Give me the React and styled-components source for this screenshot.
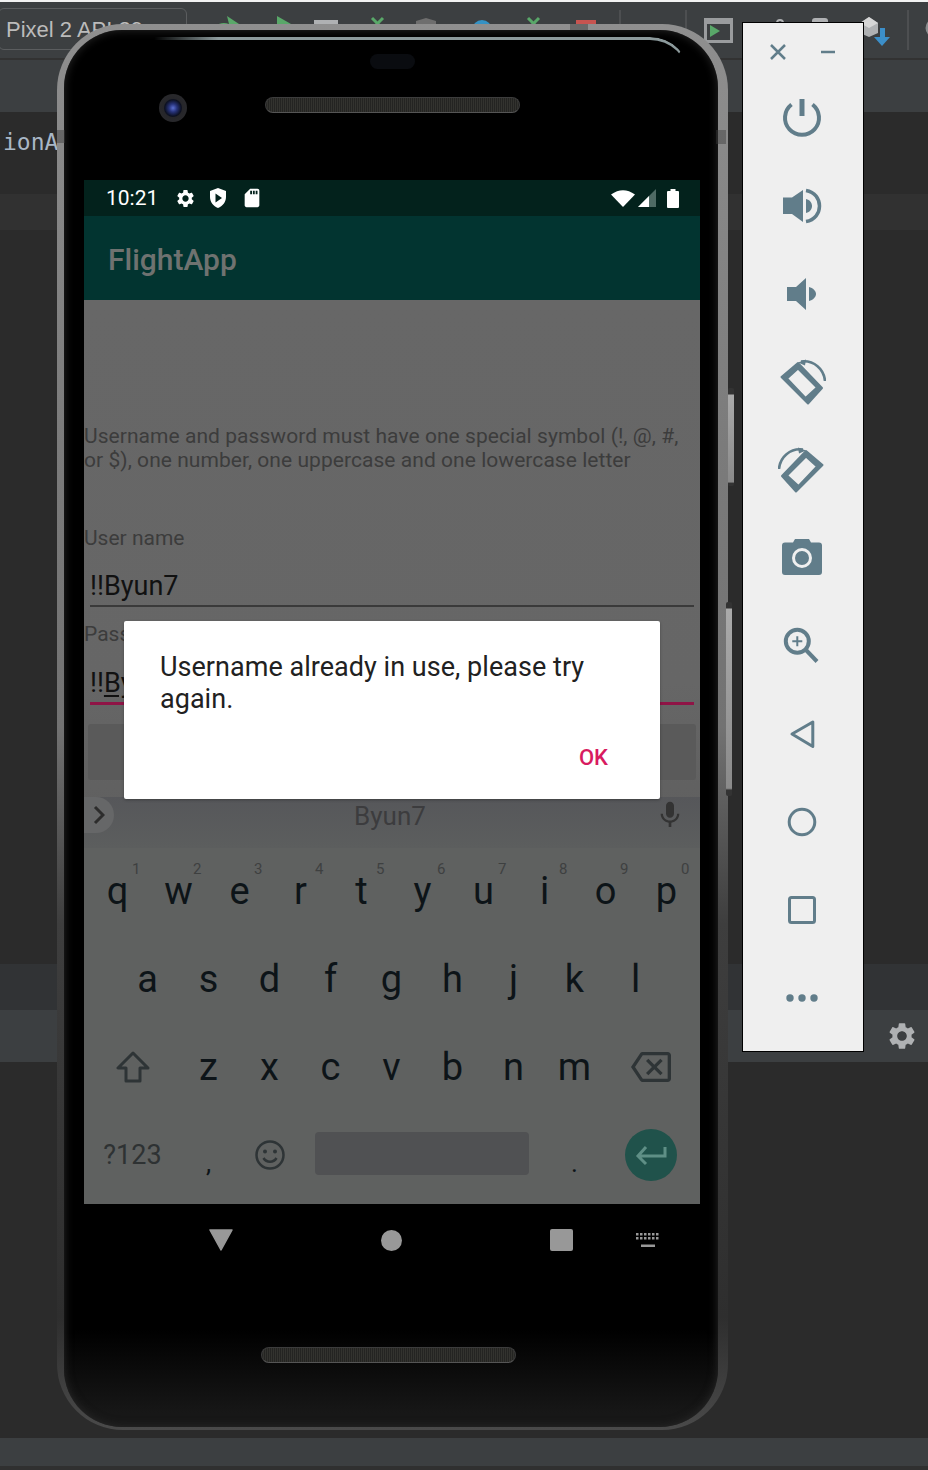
import styled, { createGlobalStyle } from "styled-components";
import { MdSettings, MdSdCard, MdMic, MdOutlineBackspace } from "react-icons/md";

const GlobalStyle = createGlobalStyle`
html, body { margin: 0; padding: 0; background: #2b2b2b; }
* { box-sizing: border-box; }
`;

const Page = styled.div`
position: relative;
width: 928px;
height: 1470px;
overflow: hidden;
background: #2b2b2b;
font-family: Roboto, "Liberation Sans", sans-serif;
`;

/* ide behind the emulator */
const Toolbar = styled.div`
display: flex;
align-items: flex-start;
height: 60px;
background: #3c3f41;
border-top: 2px solid #f2f2f2;
border-bottom: 2px solid #323232;
`;

const Combo = styled.div`
flex: none;
width: 189px;
height: 42px;
margin: 6px 0 0 -2px;
padding-left: 7px;
border: 1px solid #5b5d5f;
border-radius: 6px;
color: #bbbbbb;
font-family: "Liberation Sans", sans-serif;
font-size: 22px;
line-height: 42px;
white-space: nowrap;
`;

const ToolSlot = styled.svg`
flex: none;
margin-left: ${(p) => p.$left}px;
margin-top: ${(p) => p.$top}px;
`;

const Separator = styled.div`
flex: none;
width: 2px;
height: 40px;
margin-top: 8px;
margin-left: ${(p) => p.$left}px;
background: #4d4f51;
`;

const Band = styled.div`
height: ${(p) => p.$h}px;
background: ${(p) => p.$bg};
overflow: hidden;
`;

const CodeLine = styled.div`
margin: 17px 0 0 3px;
color: #a9b7c6;
font-family: "DejaVu Sans Mono", monospace;
font-size: 23px;
line-height: 26px;
`;

const GearBand = styled(Band)`
display: flex;
justify-content: flex-end;
align-items: center;
padding-right: 10px;
color: #afb1b3;
`;

/* phone */
const Shell = styled.div`
position: absolute;
left: 57px;
top: 24px;
width: 671px;
height: 1406px;
padding: 6px 10px 3px 7px;
border-radius: 66px;
background: linear-gradient(180deg, #8f8f8f 0, #7b7b7b 30%, #727272 50%, #3e3e3e 64%, #2e2e2e 92%, #4a4a4a 100%);
`;

const SideButton = styled.div`
position: absolute;
left: ${(p) => p.$left}px;
top: ${(p) => p.$top}px;
width: 6px;
height: ${(p) => p.$h}px;
border-radius: 2px;
background: linear-gradient(180deg, #333 0, #333 6px, #aaa 7px, #8a8a8a 96%, #333 97%);
`;

const Chip = styled.div`
position: absolute;
left: ${(p) => p.$left}px;
top: ${(p) => p.$top}px;
width: ${(p) => p.$w}px;
height: ${(p) => p.$h}px;
background: rgba(60, 60, 60, 0.45);
`;

const Bezel = styled.div`
position: relative;
display: flex;
flex-direction: column;
height: 100%;
padding: 0 17px 0 20px;
border-radius: 58px;
background: linear-gradient(180deg, #000 0, #000 93%, #171717 99%);
box-shadow: inset 0 0 10px #2a2a2a;
`;

const Highlight = styled.div`
position: absolute;
left: 90px;
right: 28px;
top: 7px;
height: 40px;
border-top: 3px solid #8c9a9c;
border-right: 2px solid transparent;
border-radius: 0 46px 0 0;
-webkit-mask-image: linear-gradient(90deg, transparent, #000 12%);
mask-image: linear-gradient(90deg, transparent, #000 12%);
`;

const TopBezel = styled.div`
flex: none;
height: 150px;
padding-top: 24px;
`;

const Sensor = styled.div`
width: 45px;
height: 15px;
margin: 0 auto 25px;
border-radius: 8px;
background: #0a0c10;
`;

const CameraRow = styled.div`
display: grid;
grid-template-columns: 1fr auto 1fr;
`;

const Camera = styled.div`
justify-self: end;
width: 28px;
height: 28px;
margin-right: 78px;
border-radius: 50%;
background: radial-gradient(circle at 50% 50%, #5b6fd0 0, #27337a 20%, #0c1020 42%, #26262a 48%, #2c2c2e 100%);
`;

const Speaker = styled.div`
width: ${(p) => p.$w}px;
height: 16px;
margin-top: ${(p) => p.$mt}px;
margin-right: ${(p) => p.$mr || 0}px;
border: 1px solid #3c3c3c;
border-bottom-color: #555;
border-radius: 8px;
background: repeating-linear-gradient(90deg, #242422 0, #242422 1px, #33332f 1px, #33332f 2px);
`;

const ChinSpeaker = styled(Speaker)`
align-self: center;
`;

const Screen = styled.div`
position: relative;
flex: none;
display: flex;
flex-direction: column;
width: 616px;
height: 1024px;
overflow: hidden;
`;

const StatusBar = styled.div`
flex: none;
display: flex;
align-items: center;
height: 36px;
padding-left: 22px;
background: #03221c;
color: #fff;
`;

const Clock = styled.span`
width: 52px;
font-size: 21px;
`;

const StatusIcon = styled.svg`
flex: none;
margin-left: ${(p) => p.$left}px;
`;

const SdIcon = styled(MdSdCard)`
flex: none;
margin-left: 14px;
`;

const AppBar = styled.div`
flex: none;
height: 84px;
padding: 26px 0 0 24px;
background: #023430;
color: #6f7270;
font-size: 30px;
font-weight: 500;
line-height: 36px;
`;

const Body = styled.div`
flex: none;
display: flex;
flex-direction: column;
height: 548px;
padding-top: 124px;
background: linear-gradient(180deg, #676767 0, #666 70%, #5e5e5e 100%);
`;

const Hint = styled.p`
margin: 0;
padding-right: 16px;
color: #3c3c3c;
font-size: 21px;
letter-spacing: 0.05px;
line-height: 24px;
`;

const FieldLabel = styled.div`
margin-top: ${(p) => p.$mt}px;
color: #3c3c3c;
font-size: 21px;
line-height: 24px;
`;

const Field = styled.div`
height: ${(p) => p.$h}px;
margin: 0 6px;
display: flex;
align-items: flex-end;
border-bottom: ${(p) => p.$line};
color: #111;
font-size: 27px;
line-height: 40px;
`;

const FieldText = styled.span`
margin-bottom: -1px;
`;

const ComposingText = styled.span`
text-decoration: underline;
text-underline-offset: 3px;
`;

const SubmitButton = styled.div`
height: 56px;
margin: 19px 4px 0;
border-radius: 3px;
background: #5a5a5a;
`;

const Suggestions = styled.div`
position: relative;
display: flex;
align-items: center;
justify-content: center;
height: 51px;
margin-top: 17px;
padding: 0 4px 14px 0;
background: linear-gradient(180deg, #56575a 0, #5c5e5e 100%);
color: #3c3c3e;
font-size: 26px;
`;

const ChevronPill = styled.div`
position: absolute;
left: 0;
top: 0;
display: flex;
align-items: center;
width: 30px;
height: 36px;
padding-left: 9px;
border-radius: 0 18px 18px 0;
background: #666768;
`;

const MicIcon = styled(MdMic)`
position: absolute;
right: 14px;
top: 2px;
color: #333;
`;

const Keyboard = styled.div`
flex: none;
height: 356px;
padding-left: 3px;
background: #5f6160;
color: #0d1418;
`;

const KeyRow = styled.div`
display: flex;
height: ${(p) => p.$h || 88}px;
padding-left: ${(p) => p.$indent || 0}px;
`;

const Key = styled.div`
position: relative;
flex: none;
display: flex;
align-items: center;
justify-content: center;
width: ${(p) => p.$w || 61}px;
font-size: 38px;
`;

const KeyHint = styled.span`
position: absolute;
left: 45px;
top: 12px;
color: #3e4040;
font-size: 15px;
line-height: 18px;
`;

const SymbolKey = styled(Key)`
color: #2e3233;
font-size: 27px;
`;

const SmallMark = styled(Key)`
padding-top: 16px;
font-size: 26px;
`;

const SpaceBar = styled.div`
width: 214px;
height: 43px;
margin-bottom: 3px;
border-radius: 4px;
background: #505153;
`;

const EnterButton = styled.div`
display: flex;
align-items: center;
justify-content: center;
width: 52px;
height: 52px;
border-radius: 50%;
background: #20524b;
`;

const Dialog = styled.div`
position: absolute;
left: 40px;
top: 441px;
display: flex;
flex-direction: column;
width: 536px;
height: 178px;
padding: 30px 36px 0;
border-radius: 2px;
background: #fff;
box-shadow: 0 1px 3px rgba(0, 0, 0, 0.3);
`;

const DialogText = styled.div`
color: #212121;
font-size: 27px;
letter-spacing: 0.03px;
line-height: 32px;
`;

const DialogAction = styled.div`
margin: 29px 16px 0 0;
align-self: flex-end;
color: #d81b60;
font-size: 22px;
font-weight: 500;
line-height: 28px;
`;

const NavRow = styled.div`
flex: none;
display: flex;
align-items: center;
width: 616px;
height: 72px;
color: #989898;
`;

const NavIcon = styled.svg`
flex: none;
margin-left: ${(p) => p.$left}px;
`;

/* emulator side panel */
const SidePanel = styled.div`
position: absolute;
left: 742px;
top: 22px;
display: flex;
flex-direction: column;
align-items: center;
width: 122px;
height: 1030px;
padding-right: 2px;
border: 1px solid #000;
background: #efefef;
color: #617d8a;
`;

const WindowButtons = styled.div`
flex: none;
display: flex;
height: 51px;
gap: 26px;
padding: 17px 0 0 2px;
`;

const PanelSlot = styled.div`
flex: none;
display: flex;
align-items: center;
justify-content: center;
height: 88px;
`;

const PanelIcon = ({ children }) => (
  <PanelSlot>
    <svg width="48" height="48" viewBox="0 0 48 48" fill="currentColor">{children}</svg>
  </PanelSlot>
);

const RotateIcon = ({ flip }) => (
  <PanelIcon>
    <g transform={flip ? "translate(48 0) scale(-1 1)" : undefined}>
      <path
        fillRule="evenodd"
        stroke="currentColor"
        strokeWidth="2"
        strokeLinejoin="round"
        d="M3.500 19 20 5 44 30 30 45.500ZM9 20.500 27.500 40 39 29.500 20 10.500Z"
      />
      <path d="M23 3.500C36 2 46 11 47 23" fill="none" stroke="currentColor" strokeWidth="2.600" />
      <path d="M20 4.500 28 1.500 27 7.500Z" />
    </g>
  </PanelIcon>
);

const StatusShield = () => (
  <StatusIcon $left={13} width="18" height="20" viewBox="0 0 18 20" fill="#fff">
    <path fillRule="evenodd" d="M9 0 1 3v6c0 5 3.400 9 8 11 4.600-2 8-6 8-11V3ZM6.500 5.500 13 10l-6.500 4.500Z" />
  </StatusIcon>
);

const TOP_KEYS = [["q", 1], ["w", 2], ["e", 3], ["r", 4], ["t", 5], ["y", 6], ["u", 7], ["i", 8], ["o", 9], ["p", 0]];

const App = () => {
  return (
    <Page>
      <GlobalStyle />
      <Toolbar>
        <Combo>Pixel 2 API 29</Combo>
        <ToolSlot $left={28} $top={12} width="24" height="20" viewBox="0 0 24 20">
          <path d="M0 12a11 8 0 0 1 14-2L12 2l12 8-12 10Z" fill="#59a869" />
        </ToolSlot>
        <ToolSlot $left={38} $top={12} width="16" height="20" viewBox="0 0 16 20">
          <path d="M0 2 14 10 0 18Z" fill="#59a869" />
        </ToolSlot>
        <ToolSlot $left={21} $top={18} width="24" height="20" viewBox="0 0 24 20">
          <rect width="24" height="16" fill="#afb1b3" />
        </ToolSlot>
        <ToolSlot $left={32} $top={14} width="15" height="15" viewBox="0 0 15 15">
          <path d="M2 2l11 11M13 2 2 13" stroke="#59a869" strokeWidth="3" />
        </ToolSlot>
        <ToolSlot $left={31} $top={16} width="20" height="20" viewBox="0 0 20 20">
          <path d="M0 3 10 0l10 3v14H0Z" fill="#6e6e6e" />
        </ToolSlot>
        <ToolSlot $left={36} $top={18} width="20" height="20" viewBox="0 0 20 20">
          <circle cx="10" cy="10" r="10" fill="#3592c4" />
        </ToolSlot>
        <ToolSlot $left={34} $top={14} width="15" height="15" viewBox="0 0 15 15">
          <path d="M2 2l11 11M13 2 2 13" stroke="#59a869" strokeWidth="3" />
        </ToolSlot>
        <ToolSlot $left={35} $top={18} width="20" height="20" viewBox="0 0 20 20">
          <rect width="20" height="16" fill="#c75450" />
        </ToolSlot>
        <Separator $left={23} />
        <Separator $left={64} />
        <ToolSlot $left={17} $top={16} width="29" height="25" viewBox="0 0 29 25">
          <rect x="1.500" y="1.500" width="26" height="22" fill="#3c3f41" stroke="#9a9c9e" strokeWidth="3" />
          <rect x="1" y="1" width="27" height="5" fill="#9a9c9e" />
          <path d="M6 7 16 13 6 19Z" fill="#59a869" />
        </ToolSlot>
        <ToolSlot $left={43} $top={17} width="8" height="8" viewBox="0 0 8 8">
          <circle cx="4" cy="4" r="3" fill="none" stroke="#afb1b3" strokeWidth="2" />
        </ToolSlot>
        <ToolSlot $left={28} $top={16} width="16" height="12" viewBox="0 0 16 12">
          <rect width="16" height="12" rx="3" fill="#afb1b3" />
        </ToolSlot>
        <ToolSlot $left={32} $top={15} width="30" height="29" viewBox="0 0 30 29">
          <path d="M0 6 9 0l9 6v10l-9 4-9-4Z" fill="#afb1b3" />
          <path d="M0 6 9 11l9-5-9-6Z" fill="#d6d6d6" />
          <path d="M20 11h5v9h5l-8 9-8-9h6Z" fill="#3c8fc9" />
        </ToolSlot>
        <Separator $left={17} />
        <ToolSlot $left={16} $top={16} width="16" height="20" viewBox="0 0 16 20">
          <circle cx="10" cy="10" r="8" fill="none" stroke="#8a8c8e" strokeWidth="3" />
        </ToolSlot>
      </Toolbar>
      <Band $h={52} $bg="#3c3f41" />
      <Band $h={82} $bg="#2b2b2b">
        <CodeLine>ionA</CodeLine>
      </Band>
      <Band $h={36} $bg="#313131" />
      <Band $h={734} $bg="#2b2b2b" />
      <Band $h={46} $bg="#313335" />
      <GearBand $h={52} $bg="#3c3f41">
        <MdSettings size={32} />
      </GearBand>
      <Band $h={376} $bg="#2b2b2b" />
      <Band $h={28} $bg="#3c3f41" />
      <Band $h={4} $bg="#303030" />

      <Shell>
        <SideButton $left={671} $top={364} $h={98} />
        <SideButton $left={669} $top={578} $h={194} />
        <Bezel>
          <Highlight />
          <Chip $left={-7} $top={100} $w={8} $h={13} />
          <Chip $left={652} $top={100} $w={10} $h={14} />
          <Chip $left={506} $top={-6} $w={18} $h={6} />
          <TopBezel>
            <Sensor />
            <CameraRow>
              <Camera />
              <Speaker $w={255} $mt={3} />
            </CameraRow>
          </TopBezel>
          <Screen>
            <StatusBar>
              <Clock>10:21</Clock>
              <StatusIcon as={MdSettings} $left={17} size={21} />
              <StatusShield />
              <SdIcon size={22} />
              <StatusIcon $left={348} width="24" height="18" viewBox="0 0 24 18" fill="#fff">
                <path d="M0 5.500Q12-3 24 5.500L12 18Z" />
              </StatusIcon>
              <StatusIcon $left={3} width="19" height="18" viewBox="0 0 19 18">
                <path d="M0 18 18 0v18Z" fill="#4f6a64" />
                <path d="M0 18 11 7v11Z" fill="#fff" />
              </StatusIcon>
              <StatusIcon $left={10} width="12" height="19" viewBox="0 0 12 19" fill="#fff">
                <path d="M3.500 0h5v2H11a1 1 0 0 1 1 1v15a1 1 0 0 1-1 1H1a1 1 0 0 1-1-1V3a1 1 0 0 1 1-1h2.500Z" />
              </StatusIcon>
            </StatusBar>
            <AppBar>FlightApp</AppBar>
            <Body>
              <Hint>Username and password must have one special symbol (!, @, #, or $), one number, one uppercase and one lowercase letter</Hint>
              <FieldLabel $mt={54}>User name</FieldLabel>
              <Field $h={57} $line="2px solid #3a3a3a">
                <FieldText>!!Byun7</FieldText>
              </Field>
              <FieldLabel $mt={15}>Password</FieldLabel>
              <Field $h={59} $line="3px solid #8f1446">
                <FieldText>!!<ComposingText>Byun7</ComposingText></FieldText>
              </Field>
              <SubmitButton />
              <Suggestions>
                <ChevronPill>
                  <svg width="12" height="20" viewBox="0 0 12 20">
                    <path d="M2 2l8 8-8 8" fill="none" stroke="#2c2c2c" strokeWidth="3" />
                  </svg>
                </ChevronPill>
                Byun7
                <MicIcon size={32} />
              </Suggestions>
            </Body>
            <Keyboard>
              <KeyRow $h={86}>
                {TOP_KEYS.map(([k, n]) => (
                  <Key key={k}>{k}<KeyHint>{n}</KeyHint></Key>
                ))}
              </KeyRow>
              <KeyRow $indent={30} $h={89}>
                {["a", "s", "d", "f", "g", "h", "j", "k", "l"].map((k) => <Key key={k}>{k}</Key>)}
              </KeyRow>
              <KeyRow>
                <Key $w={91}>
                  <svg width="34" height="32" viewBox="0 0 34 32">
                    <path d="M17 2 2 17h8v13h14V17h8Z" fill="none" stroke="#2e3436" strokeWidth="3" strokeLinejoin="round" />
                  </svg>
                </Key>
                {["z", "x", "c", "v", "b", "n", "m"].map((k) => <Key key={k}>{k}</Key>)}
                <Key $w={92}>
                  <MdOutlineBackspace size={40} color="#2e3436" />
                </Key>
              </KeyRow>
              <KeyRow>
                <SymbolKey $w={91}>?123</SymbolKey>
                <SmallMark>,</SmallMark>
                <Key>
                  <svg width="32" height="32" viewBox="0 0 32 32" fill="#2e3436">
                    <circle cx="16" cy="16" r="13.500" fill="none" stroke="#2e3436" strokeWidth="2.500" />
                    <circle cx="11" cy="12.500" r="2" />
                    <circle cx="21" cy="12.500" r="2" />
                    <path d="M9.500 19c3 5 10 5 13 0" fill="none" stroke="#2e3436" strokeWidth="2.500" />
                  </svg>
                </Key>
                <Key $w={244}><SpaceBar /></Key>
                <SmallMark>.</SmallMark>
                <Key $w={92}>
                  <EnterButton>
                    <svg width="32" height="22" viewBox="0 0 32 22">
                      <path d="M30 3v9H3M11 3 3 12l8 8" fill="none" stroke="#5f8f86" strokeWidth="3" />
                    </svg>
                  </EnterButton>
                </Key>
              </KeyRow>
            </Keyboard>
            <Dialog>
              <DialogText>Username already in use, please try again.</DialogText>
              <DialogAction>OK</DialogAction>
            </Dialog>
          </Screen>
          <NavRow>
            <NavIcon $left={125} width="24" height="22" viewBox="0 0 24 22" fill="currentColor">
              <path d="M1 1h22L12 21Z" stroke="currentColor" strokeWidth="1.500" strokeLinejoin="round" />
            </NavIcon>
            <NavIcon $left={148} width="21" height="21" viewBox="0 0 21 21" fill="currentColor">
              <circle cx="10.500" cy="10.500" r="10.500" />
            </NavIcon>
            <NavIcon $left={148} width="23" height="22" viewBox="0 0 23 22" fill="currentColor">
              <rect width="23" height="22" rx="2" />
            </NavIcon>
            <NavIcon $left={63} width="24" height="14" viewBox="0 0 24 14" fill="currentColor">
              {[0, 4, 8, 12, 16, 20].map((x) => <rect key={x} x={x} y="0" width="2.500" height="2.500" />)}
              {[0, 4, 8, 12, 16, 20].map((x) => <rect key={x} x={x} y="4" width="2.500" height="2.500" />)}
              <rect x="5" y="11.500" width="14" height="2.500" />
            </NavIcon>
          </NavRow>
          <ChinSpeaker $w={255} $mt={71} $mr={8} />
        </Bezel>
      </Shell>

      <SidePanel>
        <WindowButtons>
          <svg width="24" height="24" viewBox="0 0 24 24">
            <path d="M5 5l14 14M19 5 5 19" stroke="currentColor" strokeWidth="2.500" />
          </svg>
          <svg width="24" height="24" viewBox="0 0 24 24">
            <path d="M5 12h14" stroke="currentColor" strokeWidth="2.500" />
          </svg>
        </WindowButtons>
        <PanelIcon>
          <path d="M13.500 10.500A17 17 0 1 0 34.500 10.500" fill="none" stroke="currentColor" strokeWidth="4" />
          <path d="M24 5v17" stroke="currentColor" strokeWidth="5" />
        </PanelIcon>
        <PanelIcon>
          <path d="M5 15.500h9L25 8v32L14 32H5Z" />
          <path d="M28 17c4 1 6 4 6 7s-2 6-6 7Z" />
          <path d="M28 8.500C37 10 41.500 17 41.500 24S37 38 28 39.500" fill="none" stroke="currentColor" strokeWidth="3.500" />
        </PanelIcon>
        <PanelIcon>
          <path d="M9 17h9l10-9v32L18 31H9Z" />
          <path d="M31 17c4 1 7 4 7 7s-3 6-7 7Z" />
        </PanelIcon>
        <RotateIcon />
        <RotateIcon flip />
        <PanelIcon>
          <path d="M15 8.500 17 5h14l2 3.500h8a3 3 0 0 1 3 3V38a3 3 0 0 1-3 3H7a3 3 0 0 1-3-3V11.500a3 3 0 0 1 3-3Z" />
          <circle cx="24" cy="24" r="8.500" fill="none" stroke="#efefef" strokeWidth="3" />
        </PanelIcon>
        <PanelIcon>
          <circle cx="19.300" cy="19.300" r="11.500" fill="none" stroke="currentColor" strokeWidth="4" />
          <path d="M28 28l11 11.500" stroke="currentColor" strokeWidth="4" />
          <path d="M14.300 19.300h10M19.300 14.300v10" stroke="currentColor" strokeWidth="2" />
        </PanelIcon>
        <PanelIcon>
          <path d="M14 24 34.800 12v24.500Z" fill="none" stroke="currentColor" strokeWidth="3" strokeLinejoin="round" />
        </PanelIcon>
        <PanelIcon>
          <circle cx="24" cy="24" r="12.800" fill="none" stroke="currentColor" strokeWidth="3" />
        </PanelIcon>
        <PanelIcon>
          <rect x="11.500" y="11.500" width="25" height="25" rx="2" fill="none" stroke="currentColor" strokeWidth="3" />
        </PanelIcon>
        <PanelIcon>
          <circle cx="12" cy="24" r="3.700" />
          <circle cx="24" cy="24" r="3.700" />
          <circle cx="36" cy="24" r="3.700" />
        </PanelIcon>
      </SidePanel>
    </Page>
  );
};

export default App;
